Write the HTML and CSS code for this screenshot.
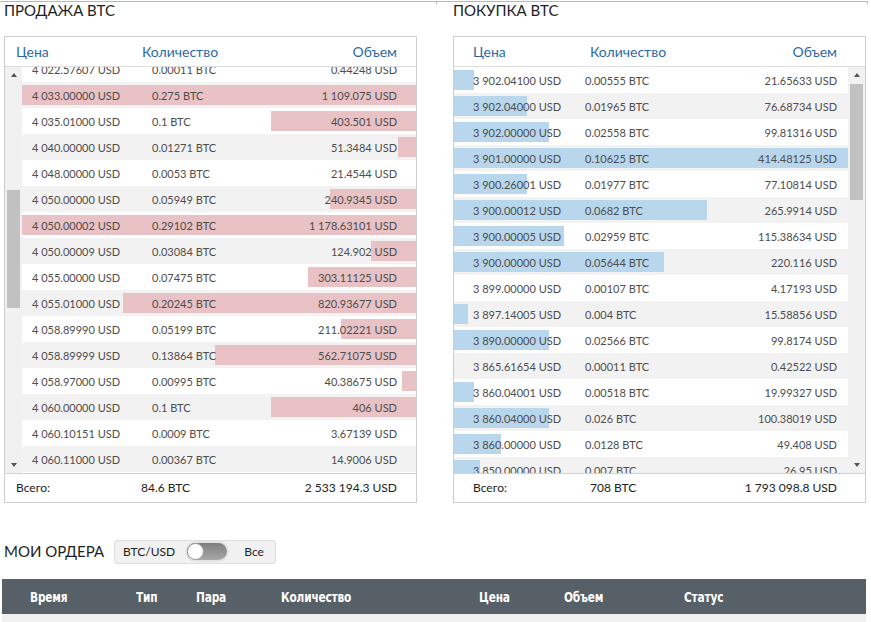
FILE: index.html
```html
<!DOCTYPE html>
<html lang="ru">
<head>
<meta charset="utf-8">
<title>Стакан BTC</title>
<link rel="stylesheet" href="styles.css">
</head>
<body>
<div class="topline"><div class="tl tl-a"></div><div class="tl tl-b"></div></div>
<div class="books">
  <section class="panel sell">
    <h2 class="panel-title">ПРОДАЖА BTC</h2>
    <div class="book">
      <div class="book-head"><span class="c-price">Цена</span><span class="c-qty">Количество</span><span class="c-vol">Объем</span></div>
      <div class="book-body">
        <div class="scrollbar">
          <span class="arrow up"></span>
          <div class="track"><div class="thumb"></div></div>
          <span class="arrow down"></span>
        </div>
        <div class="rows-wrap">
          <div class="rows">
            <div class="row"><span class="c-price">4 022.57607 USD</span><span class="c-qty">0.00011 BTC</span><span class="c-vol">0.44248 USD</span></div>
            <div class="row"><span class="bar" style="width:394px"></span><span class="c-price">4 033.00000 USD</span><span class="c-qty">0.275 BTC</span><span class="c-vol">1 109.075 USD</span></div>
            <div class="row"><span class="bar" style="width:145px"></span><span class="c-price">4 035.01000 USD</span><span class="c-qty">0.1 BTC</span><span class="c-vol">403.501 USD</span></div>
            <div class="row"><span class="bar" style="width:18px"></span><span class="c-price">4 040.00000 USD</span><span class="c-qty">0.01271 BTC</span><span class="c-vol">51.3484 USD</span></div>
            <div class="row"><span class="c-price">4 048.00000 USD</span><span class="c-qty">0.0053 BTC</span><span class="c-vol">21.4544 USD</span></div>
            <div class="row"><span class="bar" style="width:86px"></span><span class="c-price">4 050.00000 USD</span><span class="c-qty">0.05949 BTC</span><span class="c-vol">240.9345 USD</span></div>
            <div class="row"><span class="bar" style="width:394px"></span><span class="c-price">4 050.00002 USD</span><span class="c-qty">0.29102 BTC</span><span class="c-vol">1 178.63101 USD</span></div>
            <div class="row"><span class="bar" style="width:45px"></span><span class="c-price">4 050.00009 USD</span><span class="c-qty">0.03084 BTC</span><span class="c-vol">124.902 USD</span></div>
            <div class="row"><span class="bar" style="width:108px"></span><span class="c-price">4 055.00000 USD</span><span class="c-qty">0.07475 BTC</span><span class="c-vol">303.11125 USD</span></div>
            <div class="row"><span class="bar" style="width:293px"></span><span class="c-price">4 055.01000 USD</span><span class="c-qty">0.20245 BTC</span><span class="c-vol">820.93677 USD</span></div>
            <div class="row"><span class="bar" style="width:75px"></span><span class="c-price">4 058.89990 USD</span><span class="c-qty">0.05199 BTC</span><span class="c-vol">211.02221 USD</span></div>
            <div class="row"><span class="bar" style="width:201px"></span><span class="c-price">4 058.89999 USD</span><span class="c-qty">0.13864 BTC</span><span class="c-vol">562.71075 USD</span></div>
            <div class="row"><span class="bar" style="width:14px"></span><span class="c-price">4 058.97000 USD</span><span class="c-qty">0.00995 BTC</span><span class="c-vol">40.38675 USD</span></div>
            <div class="row"><span class="bar" style="width:145px"></span><span class="c-price">4 060.00000 USD</span><span class="c-qty">0.1 BTC</span><span class="c-vol">406 USD</span></div>
            <div class="row"><span class="c-price">4 060.10151 USD</span><span class="c-qty">0.0009 BTC</span><span class="c-vol">3.67139 USD</span></div>
            <div class="row"><span class="c-price">4 060.11000 USD</span><span class="c-qty">0.00367 BTC</span><span class="c-vol">14.9006 USD</span></div>
          </div>
        </div>
      </div>
      <div class="book-foot"><span class="c-price">Всего:</span><span class="c-qty">84.6 BTC</span><span class="c-vol">2 533 194.3 USD</span></div>
    </div>
  </section>

  <section class="panel buy">
    <h2 class="panel-title">ПОКУПКА BTC</h2>
    <div class="book">
      <div class="book-head"><span class="c-price">Цена</span><span class="c-qty">Количество</span><span class="c-vol">Объем</span></div>
      <div class="book-body">
        <div class="rows-wrap">
          <div class="rows">
            <div class="row"><span class="bar" style="width:20px"></span><span class="c-price">3 902.04100 USD</span><span class="c-qty">0.00555 BTC</span><span class="c-vol">21.65633 USD</span></div>
            <div class="row"><span class="bar" style="width:73px"></span><span class="c-price">3 902.04000 USD</span><span class="c-qty">0.01965 BTC</span><span class="c-vol">76.68734 USD</span></div>
            <div class="row"><span class="bar" style="width:95px"></span><span class="c-price">3 902.00000 USD</span><span class="c-qty">0.02558 BTC</span><span class="c-vol">99.81316 USD</span></div>
            <div class="row"><span class="bar" style="width:394px"></span><span class="c-price">3 901.00000 USD</span><span class="c-qty">0.10625 BTC</span><span class="c-vol">414.48125 USD</span></div>
            <div class="row"><span class="bar" style="width:73px"></span><span class="c-price">3 900.26001 USD</span><span class="c-qty">0.01977 BTC</span><span class="c-vol">77.10814 USD</span></div>
            <div class="row"><span class="bar" style="width:253px"></span><span class="c-price">3 900.00012 USD</span><span class="c-qty">0.0682 BTC</span><span class="c-vol">265.9914 USD</span></div>
            <div class="row"><span class="bar" style="width:110px"></span><span class="c-price">3 900.00005 USD</span><span class="c-qty">0.02959 BTC</span><span class="c-vol">115.38634 USD</span></div>
            <div class="row"><span class="bar" style="width:210px"></span><span class="c-price">3 900.00000 USD</span><span class="c-qty">0.05644 BTC</span><span class="c-vol">220.116 USD</span></div>
            <div class="row"><span class="c-price">3 899.00000 USD</span><span class="c-qty">0.00107 BTC</span><span class="c-vol">4.17193 USD</span></div>
            <div class="row"><span class="bar" style="width:14px"></span><span class="c-price">3 897.14005 USD</span><span class="c-qty">0.004 BTC</span><span class="c-vol">15.58856 USD</span></div>
            <div class="row"><span class="bar" style="width:95px"></span><span class="c-price">3 890.00000 USD</span><span class="c-qty">0.02566 BTC</span><span class="c-vol">99.8174 USD</span></div>
            <div class="row"><span class="c-price">3 865.61654 USD</span><span class="c-qty">0.00011 BTC</span><span class="c-vol">0.42522 USD</span></div>
            <div class="row"><span class="bar" style="width:20px"></span><span class="c-price">3 860.04001 USD</span><span class="c-qty">0.00518 BTC</span><span class="c-vol">19.99327 USD</span></div>
            <div class="row"><span class="bar" style="width:95px"></span><span class="c-price">3 860.04000 USD</span><span class="c-qty">0.026 BTC</span><span class="c-vol">100.38019 USD</span></div>
            <div class="row"><span class="bar" style="width:47px"></span><span class="c-price">3 860.00000 USD</span><span class="c-qty">0.0128 BTC</span><span class="c-vol">49.408 USD</span></div>
            <div class="row"><span class="bar" style="width:26px"></span><span class="c-price">3 850.00000 USD</span><span class="c-qty">0.007 BTC</span><span class="c-vol">26.95 USD</span></div>
          </div>
        </div>
        <div class="scrollbar">
          <span class="arrow up"></span>
          <div class="track"><div class="thumb"></div></div>
          <span class="arrow down"></span>
        </div>
      </div>
      <div class="book-foot"><span class="c-price">Всего:</span><span class="c-qty">708 BTC</span><span class="c-vol">1 793 098.8 USD</span></div>
    </div>
  </section>
</div>

<section class="orders">
  <div class="orders-top">
    <h2 class="orders-title">МОИ ОРДЕРА</h2>
    <div class="filter">
      <span class="filter-label">BTC/USD</span>
      <span class="switch"><span class="knob"></span></span>
      <span class="filter-label">Все</span>
    </div>
  </div>
  <div class="orders-head">
    <span>Время</span><span>Тип</span><span>Пара</span><span>Количество</span><span>Цена</span><span>Объем</span><span>Статус</span>
  </div>
  <div class="orders-body"></div>
</section>
</body>
</html>
```

FILE: styles.css
```css
* { box-sizing: border-box; }
html, body { margin: 0; padding: 0; background: #fff; }
body {
  font-family: Lato, "Open Sans", "Liberation Sans", sans-serif;
  color: #4a4a4a;
  width: 871px;
  height: 622px;
  overflow: hidden;
}

.topline { display: flex; height: 3px; margin-top: 1px; }
.tl { border-top: 1px solid #b9b9b9; border-right: 1px solid #b9b9b9; }
.tl-a { width: 437px; }
.tl-b { width: 431px; }

.books { display: flex; gap: 36px; padding-left: 4px; }
.panel { width: 413px; }
.panel-title {
  margin: 0 0 19px;
  font-size: 15px;
  line-height: 13px;
  font-weight: 400;
  color: #1e1e1e;
}

.book { border: 1px solid #cdcdcd; background: #fff; }
.book-head, .book-foot { display: flex; align-items: center; }
.book-head { height: 30px; border-bottom: 1px solid #dcdcdc; color: #2b69a6; font-size: 14px; }
.book-foot { height: 29px; border-top: 1px solid #d3d3d3; color: #222; font-size: 12px; padding-bottom: 1px; }
.c-vol { margin-left: auto; text-align: right; }

.sell .book-head { padding-left: 11px; padding-right: 19px; }
.sell .book-head .c-price { width: 126px; }
.sell .book-foot { padding-left: 11px; padding-right: 19px; }
.sell .book-foot .c-price { width: 125px; }
.buy .book-head { padding-left: 19px; padding-right: 28px; }
.buy .book-head .c-price { width: 117px; }
.buy .book-foot { padding-left: 19px; padding-right: 28px; }
.buy .book-foot .c-price { width: 117px; }

.book-body { display: flex; height: 406px; }
.rows-wrap { flex: 1; overflow: hidden; }
.sell .rows { margin-top: -11px; }

.row {
  position: relative;
  display: flex;
  align-items: center;
  height: 26px;
  font-size: 11px;
  color: #4d4d4d;
  background: #fff;
}
.row:nth-child(even) { background: #f2f2f2; }
.row span:not(.bar) { position: relative; }
.bar { position: absolute; top: 3px; bottom: 3px; }
.sell .bar { right: 0; background: #e8c2c4; }
.buy .bar { left: 0; background: #b8d7ec; }

.sell .row { padding: 0 19px 0 10px; }
.sell .row .c-price { width: 120px; }
.buy .row { padding: 0 11px 0 19px; }
.buy .row .c-price { width: 112px; }

.scrollbar {
  width: 17px;
  flex: 0 0 17px;
  background: #f1f1f1;
  display: flex;
  flex-direction: column;
  align-items: center;
}
.track { flex: 1; width: 100%; position: relative; }
.thumb { position: absolute; left: 2px; right: 2px; background: #c1c1c1; }
.sell .thumb { top: 107px; height: 118px; }
.buy .thumb { top: 1px; height: 116px; }
.arrow { width: 0; height: 0; border-left: 3.5px solid transparent; border-right: 3.5px solid transparent; margin: 6px 0; }
.arrow.up { border-bottom: 4px solid #555; }
.arrow.down { border-top: 4px solid #555; }

.orders { margin-top: 36px; }
.orders-top { display: flex; align-items: center; height: 25px; padding-left: 4px; }
.orders-title { margin: 0; font-size: 15px; font-weight: 400; color: #1e1e1e; line-height: 17px; }
.filter {
  margin-left: 10px;
  display: flex;
  align-items: center;
  height: 24px;
  width: 162px;
  padding: 0 8px;
  background: #f1f1f1;
  border: 1px solid #dedede;
  border-radius: 3px;
  font-size: 12px;
  color: #222;
}
.switch {
  margin: 0 17px 0 12px;
  width: 40px;
  height: 17px;
  border-radius: 9px;
  background: linear-gradient(#7e7e7e, #a8a8a8);
  box-shadow: 0 0 0 2px #e4e4e4;
  position: relative;
  display: inline-block;
}
.knob {
  position: absolute;
  left: 0;
  top: 0;
  width: 17px;
  height: 17px;
  border-radius: 50%;
  background: #fff;
  border: 1px solid #9a9a9a;
}

.orders-head {
  margin: 15px 0 0 2px;
  width: 864px;
  height: 35px;
  background: #575f67;
  color: #fff;
  display: grid;
  grid-template-columns: 106px 60px 85px 198px 85px 120px 1fr;
  align-items: center;
  padding-left: 28px;
  padding-top: 1px;
  font-family: "DejaVu Sans Condensed", "Liberation Sans", sans-serif;
  font-weight: 700;
  font-size: 14px;
}
.orders-head span {
  display: inline-block;
  transform: scaleX(0.84);
  transform-origin: left center;
  letter-spacing: -0.2px;
}
.orders-body { margin-left: 2px; width: 864px; height: 10px; background: #f0f0f0; }
```
